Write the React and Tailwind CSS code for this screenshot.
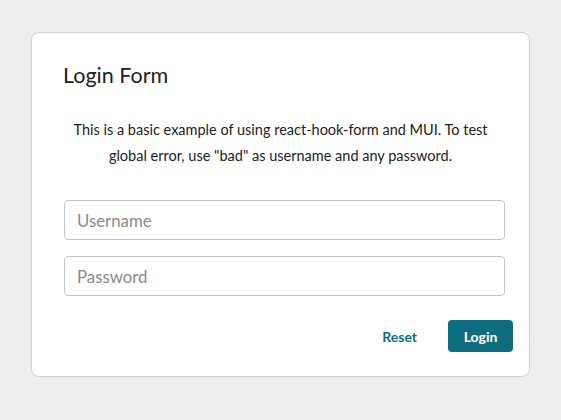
export default function App() {
  return (
    <div className="min-h-[420px] w-full bg-[#eeeeee] px-[31px] pt-[32px] font-['Lato','Liberation_Sans',sans-serif] text-[#222]">
      <div className="flex h-[345px] w-[499px] flex-col rounded-lg border border-[#d0d0d0] bg-white">
        <h1 className="pl-[31px] pt-[28px] text-[21.5px] leading-[28px] text-[#222]">Login Form</h1>
        <p className="mt-[28px] px-[36px] text-center text-[14.5px] leading-[26px] text-[#222]">
          This is a basic example of using react-hook-form and MUI. To test
          global error, use "bad" as username and any password.
        </p>
        <div className="mt-[31px] flex flex-col gap-[16px] pl-[32px] pr-[24px]">
          <input
            placeholder="Username"
            className="h-[40px] w-full rounded border border-[#c4c4c4] px-[12px] text-[16.8px] placeholder:text-[#8a8a8a] outline-none"
          />
          <input
            type="password"
            placeholder="Password"
            className="h-[40px] w-full rounded border border-[#c4c4c4] px-[12px] text-[16.8px] placeholder:text-[#8a8a8a] outline-none"
          />
        </div>
        <div className="mt-[24px] flex items-center justify-end gap-[16px] pr-[16px]">
          <button className="h-[32px] px-[15px] text-[14px] font-bold text-[#0e6e80]">Reset</button>
          <button className="h-[32px] w-[65px] rounded bg-[#0e6e80] text-[14px] font-bold text-white">Login</button>
        </div>
      </div>
    </div>
  );
}
